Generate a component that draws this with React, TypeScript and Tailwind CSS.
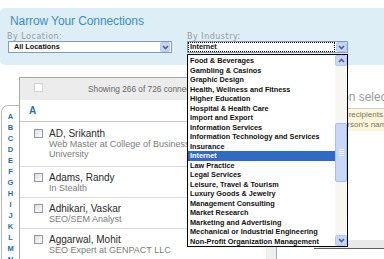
import React from "react";

const industries = [
  "Food & Beverages",
  "Gambling & Casinos",
  "Graphic Design",
  "Health, Wellness and Fitness",
  "Higher Education",
  "Hospital & Health Care",
  "Import and Export",
  "Information Services",
  "Information Technology and Services",
  "Insurance",
  "Internet",
  "Law Practice",
  "Legal Services",
  "Leisure, Travel & Tourism",
  "Luxury Goods & Jewelry",
  "Management Consulting",
  "Market Research",
  "Marketing and Advertising",
  "Mechanical or Industrial Engineering",
  "Non-Profit Organization Management",
];

const people = [
  { name: "AD, Srikanth", title: "Web Master at College of Business, Florida Atlantic University" },
  { name: "Adams, Randy", title: "In Stealth" },
  { name: "Adhikari, Vaskar", title: "SEO/SEM Analyst" },
  { name: "Aggarwal, Mohit", title: "SEO Expert at GENPACT LLC" },
  { name: "Agrawal, Ankit", title: "Software Engineer" },
];

const letters = "ABCDEFGHIJKLMNOPQRSTUVWXYZ".split("");

function Chevron({ up }: { up?: boolean }) {
  return (
    <svg width="7" height="5" viewBox="0 0 7 5" className={up ? "rotate-180" : ""}>
      <path d="M1 1 L3.5 3.6 L6 1" fill="none" stroke="#4d6185" strokeWidth="1.6" />
    </svg>
  );
}

function ArrowButton({ up, className = "" }: { up?: boolean; className?: string }) {
  return (
    <div
      className={`flex shrink-0 items-center justify-center rounded-[2px] border border-[#b6c9f4] bg-[#c6d6fb] ${className}`}
    >
      <Chevron up={up} />
    </div>
  );
}

function Box({ light }: { light?: boolean }) {
  return (
    <span
      className={`mt-[1px] block h-[9px] w-[9px] shrink-0 border ${
        light ? "border-[#d2d2d2] bg-white" : "border-[#8b9aab] bg-linear-to-br from-[#dcdcdc] to-white"
      }`}
    />
  );
}

function IndustryList() {
  return (
    <div className="absolute left-0 top-[21px] z-10 flex h-[193px] w-[161px] border border-black bg-white">
      <ul className="min-w-0 flex-1 pt-[1px]">
        {industries.map((item) => (
          <li
            key={item}
            className={`h-[9.5px] overflow-hidden whitespace-nowrap pl-[2px] text-[7.3px] font-bold leading-[9.5px] ${
              item === "Internet" ? "bg-[#316ac5] text-white" : "text-[#111]"
            }`}
          >
            {item}
          </li>
        ))}
      </ul>
      {/* scrollbar */}
      <div className="flex w-[12px] flex-col bg-[#f7f6f1]">
        <ArrowButton up className="h-[11px]" />
        <div className="mt-[57px] flex h-[59px] items-center justify-center rounded-[2px] border border-[#a9bef0] bg-[#c8d7fa]">
          <svg width="5" height="7" viewBox="0 0 5 7">
            <path d="M0 0.5H5M0 2.5H5M0 4.5H5M0 6.5H5" stroke="#eef3ff" strokeWidth="1" />
          </svg>
        </div>
        <div className="flex-1" />
        <ArrowButton className="h-[11px]" />
      </div>
    </div>
  );
}

export default function App() {
  return (
    <div className="relative h-[259px] w-[384px] overflow-hidden bg-white font-['Liberation_Sans',Arial,sans-serif]">
      {/* filter panel */}
      <div className="mt-[8px] h-[57px] rounded-l-[5px] bg-[#ddeef6] pl-[8px] pt-[6px]">
        <h2 className="ml-[2px] text-[12px] font-normal leading-[14px] tracking-[-0.1px] text-[#3b8fc4]">
          Narrow Your Connections
        </h2>
        <div className="mt-[5px] flex gap-[15px]">
          <div className="w-[164px]">
            <div className="-ml-[1px] font-['DejaVu_Sans',Verdana,sans-serif] text-[8px] leading-[8px] tracking-[0.5px] text-[#999]">
              By Location:
            </div>
            <div className="flex h-[12px] items-center border border-[#7f9db9] bg-white p-[1px]">
              <span className="flex-1 pl-[4px] text-[7.3px] font-bold leading-[10px] text-[#111]">
                All Locations
              </span>
              <ArrowButton className="h-[10px] w-[10px]" />
            </div>
          </div>
          <div className="relative w-[161px]">
            <div className="font-['DejaVu_Sans',Verdana,sans-serif] text-[8px] leading-[8px] tracking-[0.5px] text-[#999]">
              By Industry:
            </div>
            <div className="flex h-[12px] items-center gap-[1px] border border-[#7f9db9] bg-white">
              <span className="h-[10px] flex-1 border border-dotted border-black pl-[1px] text-[7.3px] font-bold leading-[8px] text-[#111]">
                Internet
              </span>
              <ArrowButton className="h-[10px] w-[11px]" />
            </div>
            <IndustryList />
          </div>
        </div>
      </div>

      {/* connections area */}
      <div className="mt-[12px] flex h-[182px]">
        {/* alphabet tab */}
        <div className="w-[19px] shrink-0 pt-[28px]">
          <div className="ml-[1px] h-full rounded-tl-[7px] border-l border-t border-[#b8b8b8] pt-[5px]">
            {letters.map((l) => (
              <div key={l} className="text-center text-[7.5px] font-bold leading-[11px] text-[#1d6cb5]">
                {l}
              </div>
            ))}
          </div>
        </div>

        {/* list panel */}
        <div className="flex w-[258px] shrink-0 flex-col border-l border-r border-t border-[#a8a8a8]">
          <div className="flex h-[22px] items-start bg-[#ececec]">
            <span className="ml-[14px] mt-[4px]">
              <Box light />
            </span>
            <div className="flex-1 pr-[23px] text-center text-[8.3px] leading-[22px] text-[#666]">
              Showing 266 of 726 connections
            </div>
          </div>
          <div className="flex min-h-0 flex-1">
            <div className="min-w-0 flex-1">
              <div className="flex h-[22px] items-center border-b border-[#c4c4c4] pl-[9px] text-[10px] font-bold text-[#1e73b9]">
                A
              </div>
              {people.map((p, i) => (
                <div
                  key={p.name}
                  className={`flex gap-[6px] border-b border-[#dadada] pl-[14px] pr-[4px] ${
                    i === 0 ? "pb-[7px] pt-[6px]" : "pb-[4px] pt-[5px]"
                  }`}
                >
                  <Box />
                  <div className="min-w-0">
                    <div className="text-[10px] leading-[11px] text-[#2a2a2a]">{p.name}</div>
                    <div className="text-[9px] leading-[10px] text-[#7c7c7c]">{p.title}</div>
                  </div>
                </div>
              ))}
            </div>
            <div className="w-[10px] shrink-0 bg-[#efefef]" />
          </div>
        </div>

        {/* recipients panel */}
        <div className="flex min-w-0 flex-1 flex-col pb-[10px] pt-[13px]">
          <div className="whitespace-nowrap pl-[23px] text-[12px] leading-[14px] text-[#999]">No person selected</div>
          <div className="ml-[33px] mt-[4px] whitespace-nowrap border-t border-[#cfcfcf] bg-[#fdf6dc] pb-[2px] pl-[4px] pt-[1px] text-[8px] leading-[9.5px] text-[#7d7460]">
            <div>Select all recipients at left,</div>
            <div>Find a person's name above.</div>
          </div>
          <div className="flex-1" />
          <div className="ml-[37px] h-[9px] border-b border-[#5f5f5f] bg-[#e9e9e9]" />
        </div>
      </div>
    </div>
  );
}
